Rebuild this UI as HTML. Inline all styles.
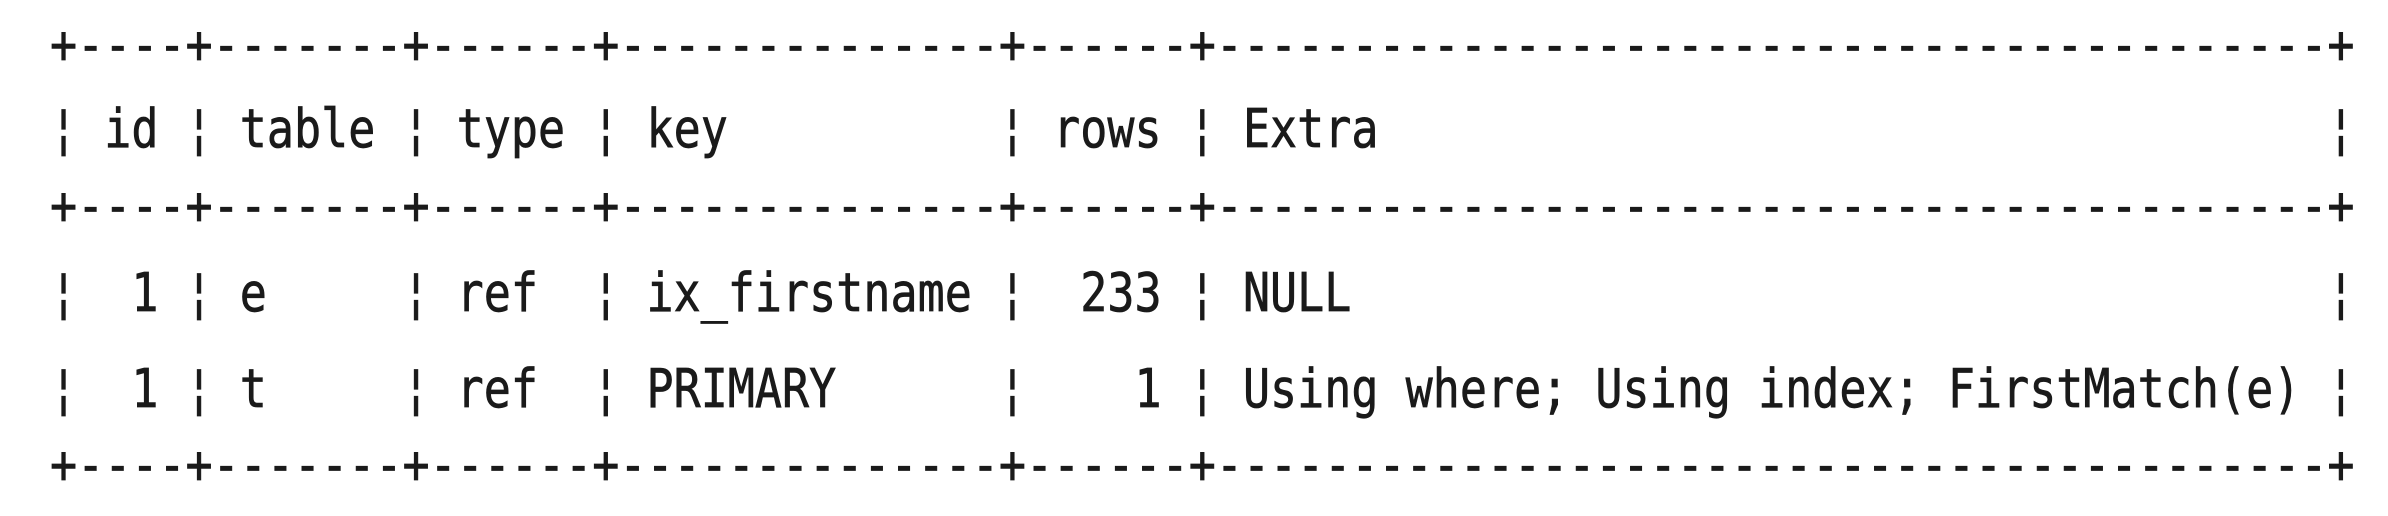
<!DOCTYPE html>
<html><head><meta charset="utf-8"><style>
html,body{margin:0;padding:0;background:#fff;width:2388px;height:516px;overflow:hidden}
.l{position:absolute;left:50px;font-family:"DejaVu Sans Mono","Liberation Mono",monospace;font-size:45px;line-height:1;white-space:pre;color:#1a1a1a;transform:scale(1,1.19);transform-origin:0 0;letter-spacing:0.02px;-webkit-text-stroke:0.6px #1a1a1a}
</style></head><body>
<div class="l" style="top:18px">+----+-------+------+--------------+------+-----------------------------------------+</div>
<div class="l" style="top:102px">¦ id ¦ table ¦ type ¦ key          ¦ rows ¦ Extra                                   ¦</div>
<div class="l" style="top:179px">+----+-------+------+--------------+------+-----------------------------------------+</div>
<div class="l" style="top:266px">¦  1 ¦ e     ¦ ref  ¦ ix_firstname ¦  233 ¦ NULL                                    ¦</div>
<div class="l" style="top:362px">¦  1 ¦ t     ¦ ref  ¦ PRIMARY      ¦    1 ¦ Using where; Using index; FirstMatch(e) ¦</div>
<div class="l" style="top:438px">+----+-------+------+--------------+------+-----------------------------------------+</div>
</body></html>
